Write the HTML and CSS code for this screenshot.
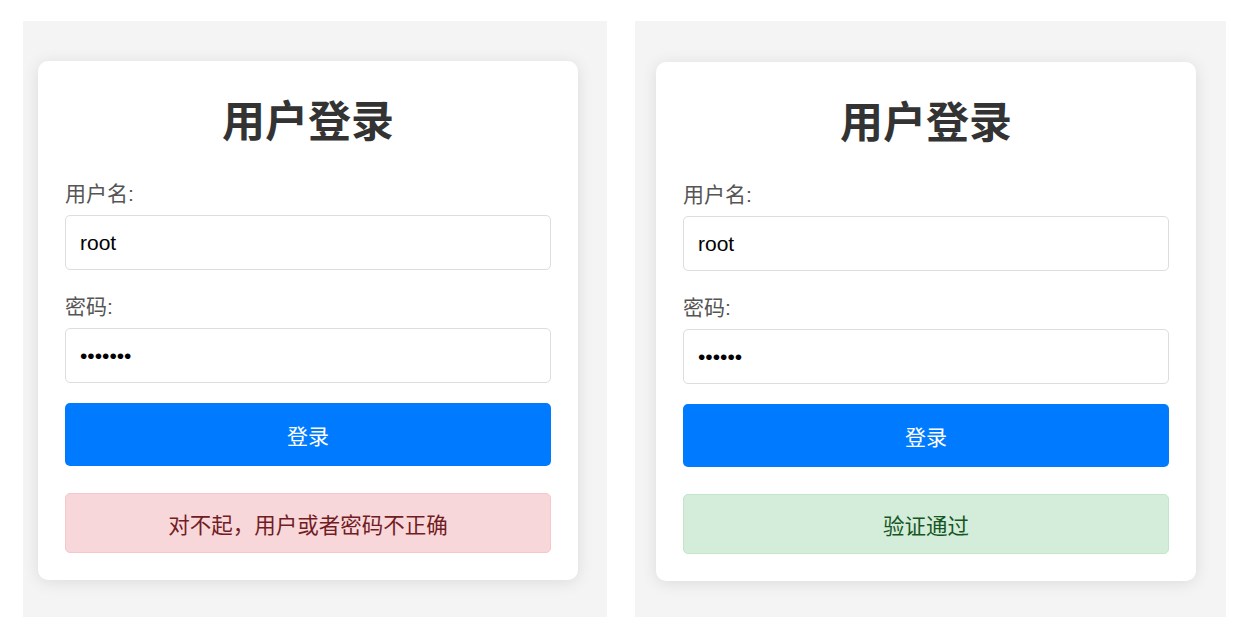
FILE: index.html
```html
<!DOCTYPE html>
<html lang="zh-CN">
  <head>
    <meta charset="UTF-8" />
    <meta name="viewport" content="width=device-width, initial-scale=1.0" />
    <title>用户登录</title>
    <link rel="stylesheet" href="styles.css">
  </head>
  <body>
    <div class="panel panel-left">
      <div class="login-card">
        <h1>用户登录</h1>
        <form class="login-form">
          <label for="username1">用户名:</label>
          <input type="text" id="username1" value="root" />
          <label for="password1">密码:</label>
          <input type="password" id="password1" value="1234567" />
          <button type="button">登录</button>
        </form>
        <div class="message error">对不起，用户或者密码不正确</div>
      </div>
    </div>

    <div class="panel panel-right">
      <div class="login-card">
        <h1>用户登录</h1>
        <form class="login-form">
          <label for="username2">用户名:</label>
          <input type="text" id="username2" value="root" />
          <label for="password2">密码:</label>
          <input type="password" id="password2" value="123456" />
          <button type="button">登录</button>
        </form>
        <div class="message success">验证通过</div>
      </div>
    </div>
  </body>
</html>
```

FILE: styles.css
```css
body {
  font-family: "Liberation Sans", Arial, "Noto Sans CJK SC", sans-serif;
  background-color: #fff;
  color: #333;
  margin: 0;
  padding: 21px 0 0 23px;
  display: flex;
  align-items: flex-start;
  gap: 28px;
}

.panel {
  background-color: #f4f4f4;
  height: 596px;
  box-sizing: border-box;
}

.panel-left {
  width: 584px;
  padding: 40px 29px 0 15px;
}

.panel-right {
  width: 591px;
  padding: 41px 30px 0 21px;
}

.login-card {
  background: #fff;
  width: 540px;
  box-sizing: border-box;
  padding: 27px;
  border-radius: 10px;
  box-shadow: 0 2px 16px rgba(0, 0, 0, 0.1);
}

h1 {
  margin: 9px 0 32px;
  font-size: 43px;
  line-height: 50px;
  font-weight: bold;
  text-align: center;
  color: #333;
}

.login-form {
  display: flex;
  flex-direction: column;
}

label {
  display: block;
  font-size: 21px;
  line-height: 30px;
  color: #555;
  margin-bottom: 6px;
}

input {
  height: 55px;
  padding: 0 14px;
  border: 1px solid #ddd;
  border-radius: 5px;
  box-sizing: border-box;
  font-family: inherit;
  font-size: 21px;
  color: #000;
  margin-bottom: 22px;
  outline: none;
}

input[type="password"] {
  margin-bottom: 20px;
}

button {
  height: 63px;
  border: none;
  border-radius: 5px;
  background-color: #007bff;
  color: #fff;
  font-family: inherit;
  font-size: 21px;
  cursor: pointer;
}

.message {
  margin-top: 27px;
  height: 60px;
  box-sizing: border-box;
  border: 1px solid;
  border-radius: 5px;
  font-size: 21.5px;
  display: flex;
  align-items: center;
  justify-content: center;
}

.error {
  background-color: #f8d7da;
  border-color: #f5c6cb;
  color: #721c24;
}

.success {
  background-color: #d4edda;
  border-color: #c3e6cb;
  color: #155724;
}
```
